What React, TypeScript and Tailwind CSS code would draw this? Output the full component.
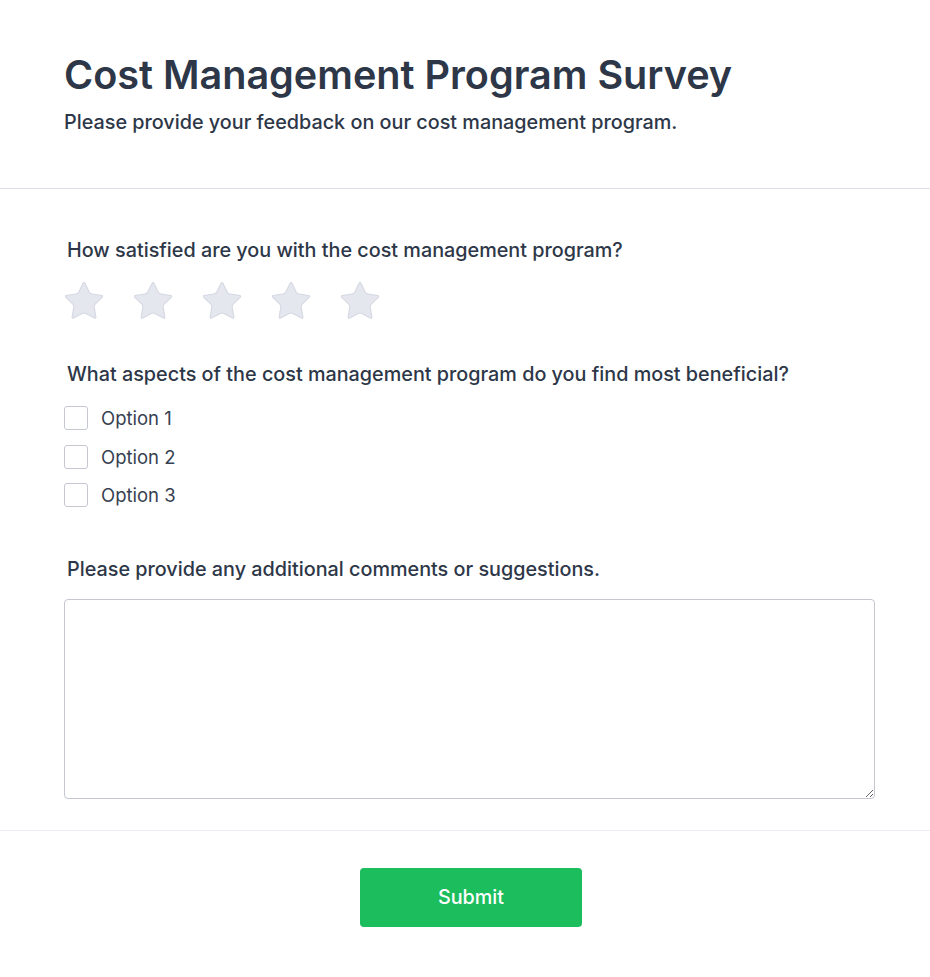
import React from "react";

const Star = () => (
  <svg width="38" height="37" viewBox="1.8 1.8 20.4 19.6" fill="#e5e7ef" stroke="#d5d8e2" strokeWidth="0.6" strokeLinejoin="round">
    <path d="M11.525 2.295a.53.53 0 0 1 .95 0l2.31 4.679a2.123 2.123 0 0 0 1.595 1.16l5.166.756a.53.53 0 0 1 .294.904l-3.736 3.638a2.123 2.123 0 0 0-.611 1.878l.882 5.14a.53.53 0 0 1-.771.56l-4.618-2.428a2.122 2.122 0 0 0-1.973 0L6.396 21.01a.53.53 0 0 1-.77-.56l.881-5.139a2.122 2.122 0 0 0-.611-1.879L2.16 9.795a.53.53 0 0 1 .294-.906l5.165-.755a2.122 2.122 0 0 0 1.597-1.16z" />
  </svg>
);

export default function App() {
  const options = ["Option 1", "Option 2", "Option 3"];

  return (
    <div className="min-h-screen bg-white text-[#2d3748]" style={{ fontFamily: "Inter, 'Noto Sans', sans-serif" }}>
      <header className="px-16 pt-[53px] pb-[52px] border-b border-[#dcdfea]">
        <h1 className="text-[39.6px] leading-[44px] font-semibold text-[#2d3748]">Cost Management Program Survey</h1>
        <p className="mt-[11px] text-[19.8px] leading-7 font-medium">Please provide your feedback on our cost management program.</p>
      </header>

      <main className="pl-16 pr-[52px] pt-[47px] pb-[31px] border-b border-[#eceef5]">
        <section>
          <h2 className="pl-[3px] text-[19.8px] leading-7 font-medium">How satisfied are you with the cost management program?</h2>
          <div className="mt-[18px] flex gap-[31px] pl-px">
            {[0, 1, 2, 3, 4].map(i => (
              <Star key={i} />
            ))}
          </div>
        </section>

        <section className="mt-[41px]">
          <h2 className="pl-[3px] text-[19.8px] leading-7 font-medium">What aspects of the cost management program do you find most beneficial?</h2>
          <div className="mt-[18px] flex flex-col gap-[14.5px]">
            {options.map(opt => (
              <label key={opt} className="flex items-center gap-[13px]">
                <span className="w-6 h-6 rounded-[3px] border border-[#c6c9d3] bg-white" />
                <span className="text-[18.5px] leading-6 text-[#374151]">{opt}</span>
              </label>
            ))}
          </div>
        </section>

        <section className="mt-[48px]">
          <h2 className="pl-[3px] text-[19.8px] leading-7 font-medium">Please provide any additional comments or suggestions.</h2>
          <textarea className="mt-[16px] block w-[811px] h-[200px] rounded border border-[#c4c7d2] outline-none" />
        </section>
      </main>

      <footer className="pl-16 pr-[52px] pt-[37px] pb-[50px] flex justify-center">
        <button className="w-[222px] h-[59px] rounded bg-[#1bbd5d] text-white text-[19.8px] font-medium">Submit</button>
      </footer>
    </div>
  );
}
